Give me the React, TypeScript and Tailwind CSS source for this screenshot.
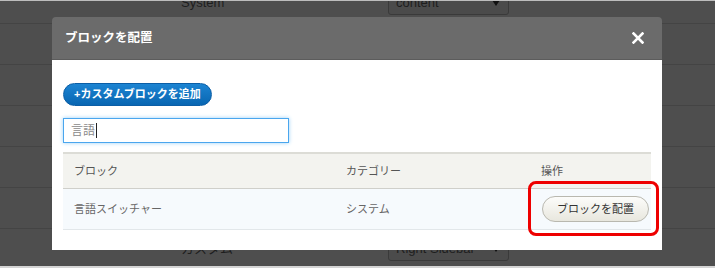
import React from "react";

const jp = { fontFamily: '"Liberation Sans", "Noto Sans CJK JP", sans-serif' };

// Background admin rows behind the modal
function BackgroundRow({ label, select }: { label?: string; select?: string }) {
  return (
    <div className="h-[41px] shrink-0 border-b border-[#444444] flex items-center relative">
      {label && (
        <span className="absolute left-[181px] text-[13px] text-[#1e1e1e]">{label}</span>
      )}
      {select && (
        <div className="absolute left-[388px] w-[121px] h-[24px] rounded-[3px] border border-[#3a3a3a] bg-[#4b4b4b] flex items-center justify-between pl-[7px] pr-[8px]">
          <span className="text-[13px] text-[#1e1e1e]">{select}</span>
          <span className="w-0 h-0 border-l-[4px] border-r-[4px] border-t-[6px] border-l-transparent border-r-transparent border-t-[#111]" />
        </div>
      )}
    </div>
  );
}

export default function App() {
  return (
    <div className="relative w-[715px] h-[268px] overflow-hidden bg-[#4e4e4e]" style={jp}>
      {/* page behind */}
      <div className="flex flex-col mt-[-17px]">
        <BackgroundRow label="System" select="content" />
        <BackgroundRow />
        <BackgroundRow />
        <BackgroundRow />
        <BackgroundRow />
        <BackgroundRow />
        <BackgroundRow label="カスタム" select="Right Sidebar" />
      </div>
      <div className="absolute left-0 right-0 top-0 h-px bg-[#bdbdbd]" />
      <div className="absolute left-0 right-0 bottom-0 h-[2px] bg-[#d4d4d4]" />

      {/* modal */}
      <div className="absolute left-[52px] top-[17px] w-[610px] h-[233px] flex flex-col">
        <div className="h-[43px] shrink-0 bg-[#6b6b6b] rounded-t-[4px] border-b border-[#5c5c5c] flex items-center justify-between pl-[13px] pr-[18px]">
          <span className="text-[12.5px] font-bold text-white">ブロックを配置</span>
          <svg width="12" height="12" viewBox="0 0 12 12">
            <path d="M1.5 1.5 L10.5 10.5 M10.5 1.5 L1.5 10.5" stroke="#fff" strokeWidth="2.6" strokeLinecap="square" />
          </svg>
        </div>
        <div className="flex-1 bg-white px-[11px] pt-[23px] flex flex-col relative">
          <button className="self-start h-[23px] px-[10px] rounded-full bg-gradient-to-b from-[#1c84d2] to-[#0866b2] border border-[#0b5ea6] text-white text-[11px] font-bold flex items-center">
            +カスタムブロックを追加
          </button>
          <div className="mt-[12px] w-[226px] h-[25px] border border-[#4aa6ee] shadow-[0_0_4px_#9ad0f7] flex items-center pl-[7px]">
            <span className="text-[12px] text-[#8a8a8a]">言語</span>
            <span className="w-px h-[15px] bg-[#222] ml-px" />
          </div>

          <div className="mt-[9px] flex flex-col text-[11px]">
            <div className="grid grid-cols-[272px_195px_1fr] h-[37px] bg-[#f3f3ef] border-t-2 border-t-[#dcdcd6] border-b border-b-[#cfcfca] items-center text-[#555]">
              <span className="pl-[11px]">ブロック</span>
              <span className="pl-[11px]">カテゴリー</span>
              <span className="pl-[11px]">操作</span>
            </div>
            <div className="grid grid-cols-[272px_195px_1fr] h-[41px] bg-[#f6fafd] border-b border-b-[#e2e7ea] items-center text-[#666]">
              <span className="pl-[11px]">言語スイッチャー</span>
              <span className="pl-[11px]">システム</span>
              <div className="pl-[12px]">
                <button className="w-[107px] h-[26px] rounded-full border border-[#b9b8af] bg-gradient-to-b from-[#fcfcfa] to-[#e8e7de] text-[11px] text-[#333]">
                  ブロックを配置
                </button>
              </div>
            </div>
          </div>

          {/* highlight annotation */}
          <div className="absolute left-[476px] top-[121px] w-[131px] h-[55px] rounded-[8px] border-[3px] border-[#ee0000]" />
        </div>
      </div>
    </div>
  );
}
